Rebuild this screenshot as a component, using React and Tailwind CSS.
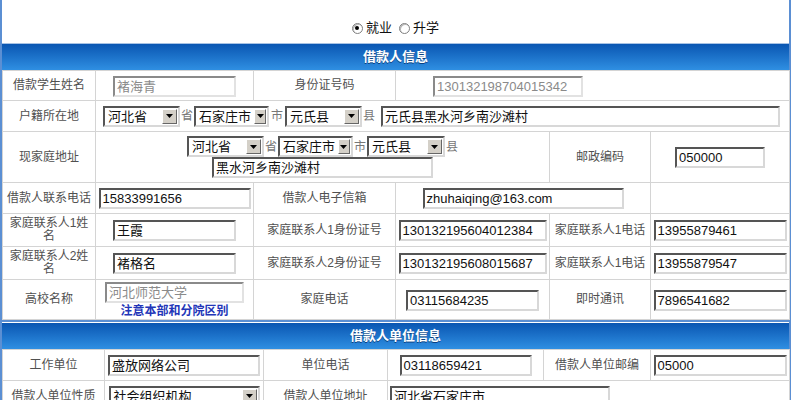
const font = "font-['Liberation_Sans','Noto_Sans_CJK_SC',sans-serif]";

function Radio({ checked }) {
  return (
    <span className="inline-flex items-center justify-center w-[11px] h-[11px] rounded-full border border-[#808080] bg-white shadow-[inset_1px_1px_0_#b8b8b8]">
      {checked && <span className="w-[4px] h-[4px] rounded-full bg-black" />}
    </span>
  );
}

function Field({ className = "", muted, children }) {
  return (
    <span
      className={`inline-block align-middle h-[21px] bg-white border-2 px-[2px] text-left text-[13px] leading-[17px] whitespace-nowrap overflow-hidden ${
        muted
          ? "border-t-[#8a8a8a] border-l-[#8a8a8a] border-r-[#e2e2e2] border-b-[#e2e2e2] text-[#8a8a8a]"
          : "border-t-[#555] border-l-[#555] border-r-[#d8d8d8] border-b-[#d8d8d8] text-[#111]"
      } ${className}`}
    >
      {children}
    </span>
  );
}

function Combo({ className = "", children }) {
  return (
    <span
      className={`inline-flex items-center h-[21px] bg-white border-2 border-t-[#555] border-l-[#555] border-r-[#d8d8d8] border-b-[#d8d8d8] ${className}`}
    >
      <span className="flex-1 px-[3px] text-left text-[13px] leading-[17px] text-[#111] whitespace-nowrap">{children}</span>
      <span className="w-[15px] h-[15px] mr-[1px] bg-[#d4d0c8] border border-t-white border-l-white border-r-[#666] border-b-[#666] flex items-center justify-center">
        <svg width="7" height="4" viewBox="0 0 7 4">
          <path d="M0 0h7L3.5 4z" fill="#000" />
        </svg>
      </span>
    </span>
  );
}

const Unit = ({ className = "", children }) => (
  <span className={`text-[12px] text-[#777] ${className}`}>{children}</span>
);

const L = ({ children, colSpan }) => (
  <td colSpan={colSpan} className="border border-[#d4d4d4] px-[3px] text-center align-middle text-[12px] leading-[13px] text-[#505050]">
    {children}
  </td>
);

const V = ({ children, colSpan, className = "" }) => (
  <td colSpan={colSpan} className={`border border-[#d4d4d4] p-0 text-center align-middle ${className}`}>
    {children}
  </td>
);

function Header({ children }) {
  return (
    <div className="h-[26px] bg-linear-to-b from-[#0a56b2] to-[#2f8fe2] flex items-center justify-center text-white font-bold text-[13px] [text-shadow:0_1px_0_#0a3f80]">
      {children}
    </div>
  );
}

export default function App() {
  return (
    <div className={`w-[791px] bg-white border-x-2 border-[#5b8fd3] ${font}`}>
      <div className="h-[43px] pt-[13px] flex items-center justify-center text-[13px] text-[#111]">
        <Radio checked />
        <span className="ml-[3px] mr-[7px]">就业</span>
        <Radio />
        <span className="ml-[3px]">升学</span>
      </div>

      <div className="border-t border-[#a7c2e4]">
        <Header>借款人信息</Header>
        <table className="w-full table-fixed border-collapse">
          <colgroup>
            <col className="w-[93px]" />
            <col className="w-[158px]" />
            <col className="w-[142px]" />
            <col className="w-[154px]" />
            <col className="w-[101px]" />
            <col className="w-[139px]" />
          </colgroup>
          <tbody>
            <tr className="h-[30px]">
              <L>借款学生姓名</L>
              <V>
                <Field muted className="w-[123px]">褚海青</Field>
              </V>
              <L>身份证号码</L>
              <V colSpan={3} className="text-left pl-[37px]">
                <Field muted className="w-[150px]">130132198704015342</Field>
              </V>
            </tr>
            <tr className="h-[31px]">
              <L>户籍所在地</L>
              <V colSpan={5}>
                <div className="flex items-center pl-[7px]">
                  <Combo className="w-[77px]">河北省</Combo>
                  <Unit className="mx-[1px]">省</Unit>
                  <Combo className="w-[75px]">石家庄市</Combo>
                  <Unit className="mx-[2px]">市</Unit>
                  <Combo className="w-[77px]">元氏县</Combo>
                  <Unit className="ml-[1px] mr-[6px]">县</Unit>
                  <Field className="w-[399px]">元氏县黑水河乡南沙滩村</Field>
                </div>
              </V>
            </tr>
            <tr className="h-[51px]">
              <L>现家庭地址</L>
              <V colSpan={3}>
                <div className="flex flex-col items-center">
                  <div className="flex items-center">
                    <Combo className="w-[77px]">河北省</Combo>
                    <Unit className="mx-[1px]">省</Unit>
                    <Combo className="w-[75px]">石家庄市</Combo>
                    <Unit className="mx-[1px]">市</Unit>
                    <Combo className="w-[78px]">元氏县</Combo>
                    <Unit className="ml-[1px]">县</Unit>
                  </div>
                  <Field className="w-[221px]">黑水河乡南沙滩村</Field>
                </div>
              </V>
              <L>邮政编码</L>
              <V>
                <Field className="w-[90px]">050000</Field>
              </V>
            </tr>
            <tr className="h-[31px]">
              <L>借款人联系电话</L>
              <V>
                <Field className="w-[152px]">15833991656</Field>
              </V>
              <L>借款人电子信箱</L>
              <V colSpan={2}>
                <Field className="w-[201px]">zhuhaiqing@163.com</Field>
              </V>
              <V />
            </tr>
            <tr className="h-[33px]">
              <L>家庭联系人1姓名</L>
              <V>
                <Field className="w-[123px]">王霞</Field>
              </V>
              <L>家庭联系人1身份证号</L>
              <V>
                <Field className="w-[148px]">130132195604012384</Field>
              </V>
              <L>家庭联系人1电话</L>
              <V>
                <Field className="w-[133px]">13955879461</Field>
              </V>
            </tr>
            <tr className="h-[33px]">
              <L>家庭联系人2姓名</L>
              <V>
                <Field className="w-[123px]">褚格名</Field>
              </V>
              <L>家庭联系人2身份证号</L>
              <V>
                <Field className="w-[148px]">130132195608015687</Field>
              </V>
              <L>家庭联系人1电话</L>
              <V>
                <Field className="w-[133px]">13955879547</Field>
              </V>
            </tr>
            <tr className="h-[40px]">
              <L>高校名称</L>
              <V>
                <div className="flex flex-col items-center">
                  <Field muted className="w-[139px]">河北师范大学</Field>
                  <span className="mt-[1px] text-[12px] leading-[14px] font-bold text-[#2336b8]">注意本部和分院区别</span>
                </div>
              </V>
              <L>家庭电话</L>
              <V>
                <Field className="w-[133px]">03115684235</Field>
              </V>
              <L>即时通讯</L>
              <V>
                <Field className="w-[133px]">7896541682</Field>
              </V>
            </tr>
          </tbody>
        </table>
      </div>

      <div className="border-t-2 border-[#5b8fd3] pt-[1px]">
        <Header>借款人单位信息</Header>
        <table className="w-full table-fixed border-collapse">
          <colgroup>
            <col className="w-[102px]" />
            <col className="w-[159px]" />
            <col className="w-[124px]" />
            <col className="w-[156px]" />
            <col className="w-[107px]" />
            <col className="w-[139px]" />
          </colgroup>
          <tbody>
            <tr className="h-[31px]">
              <L>工作单位</L>
              <V>
                <Field className="w-[152px]">盛放网络公司</Field>
              </V>
              <L>单位电话</L>
              <V>
                <Field className="w-[132px]">03118659421</Field>
              </V>
              <L>借款人单位邮编</L>
              <V>
                <Field className="w-[133px]">05000</Field>
              </V>
            </tr>
            <tr className="h-[31px]">
              <L>借款人单位性质</L>
              <V>
                <div className="flex justify-center">
                  <Combo className="w-[151px]">社会组织机构</Combo>
                </div>
              </V>
              <L>借款人单位地址</L>
              <V colSpan={3} className="text-left pl-[2px]">
                <Field className="w-[220px]">河北省石家庄市</Field>
              </V>
            </tr>
          </tbody>
        </table>
      </div>
    </div>
  );
}
